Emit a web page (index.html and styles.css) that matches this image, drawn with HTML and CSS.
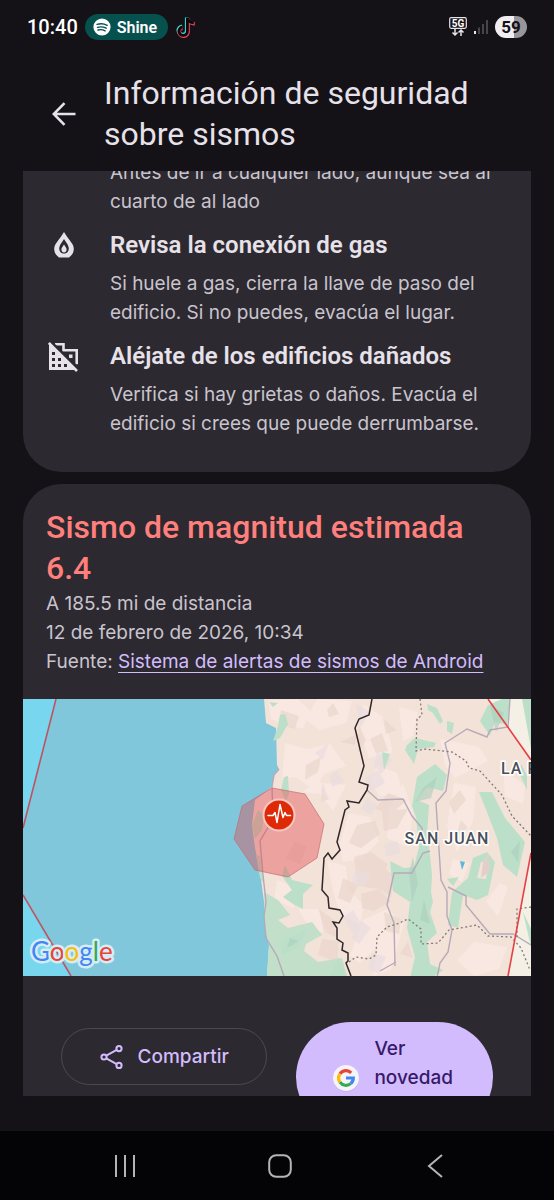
FILE: index.html
```html
<!DOCTYPE html>
<html lang="es">
<head>
  <meta charset="UTF-8" />
  <meta name="viewport" content="width=device-width, initial-scale=1.0"/>
  <title>Información de seguridad sobre sismos</title>
  <link rel="stylesheet" href="styles.css">
</head>
<body>
<div class="screen">

  <!-- Status bar -->
  <div class="status-bar">
    <span class="clock">10:40</span>
    <span class="now-playing">
      <svg width="18" height="18" viewBox="0 0 18 18">
        <circle cx="9" cy="9" r="8.6" fill="#fff"/>
        <path d="M4 6.4c3.400-1 7.200-.7 10.200.9M4.500 9.300c2.900-.8 6-.5 8.700.9M5 12c2.400-.6 4.900-.4 7.100.8" fill="none" stroke="#06504e" stroke-width="1.400" stroke-linecap="round"/>
      </svg>
      Shine
    </span>
    <svg class="tiktok" width="20" height="22" viewBox="0 0 20 22">
      <path d="M10.800 1.500v13a4.200 4.200 0 1 1-4.600-4.200" fill="none" stroke="#35d5d0" stroke-width="3.800"/>
      <path d="M12 2.500v13a4.400 4.400 0 1 1-5.400-4M12 3c1 3 3 4.600 6.800 4.800" fill="none" stroke="#e8405c" stroke-width="3.800"/>
      <path d="M11.400 1.700v13.300a4.200 4.200 0 1 1-4.800-4M11.400 2c.8 2.800 2.800 4.400 6.400 4.800" fill="none" stroke="#0a0a0c" stroke-width="2.800"/>
    </svg>
    <span class="status-icons">
      <svg width="18" height="20" viewBox="0 0 18 20">
        <rect x=".7" y=".7" width="16.600" height="10.600" rx="1.500" fill="none" stroke="#e6e4e8" stroke-width="1.200"/>
        <text x="9" y="9.500" text-anchor="middle" class="net-label">5G</text>
        <path d="M6 12v6M3.500 15.500 6 18l2.500-2.500M12 19v-6M9.500 15.500 12 13l2.500 2.500" fill="none" stroke="#e6e4e8" stroke-width="1.500"/>
      </svg>
      <svg width="14" height="16" viewBox="0 0 14 16">
        <path d="M1 12v3" stroke="#fff" stroke-width="1.800"/>
        <path d="M5 8.500V15M9 5v10M13 1v14" stroke="#5d5b61" stroke-width="1.400"/>
      </svg>
      <span class="battery">59</span>
    </span>
  </div>

  <!-- Header -->
  <header class="app-header">
    <a href="#" class="back" aria-label="Atrás">
      <svg width="24" height="24" viewBox="0 0 24 24" fill="none" stroke="#e7e1e9" stroke-width="2.600"><path d="M23.500 12H2M12.500 1.200 1.800 12l10.700 10.800"/></svg>
    </a>
    <h1>Información de seguridad sobre sismos</h1>
  </header>

  <!-- Content -->
  <main class="content">
    <section class="card tips">
      <div class="tip tip-cut">
        <p>Antes de ir a cualquier lado, aunque sea al cuarto de al lado</p>
      </div>
      <div class="tip">
        <svg width="32" height="32" viewBox="0 0 32 32">
          <path fill-rule="evenodd" fill="#e7e1e9" d="M16 3c2 3.500 4.500 6.500 8 11.500 3.400 5 1.800 10.500-3 14h-10c-4.800-3.500-6.400-9-3-14C11.500 9.500 14 6.500 16 3zm0 7c-1.500 2.500-4 5-4.700 8.500-.5 3.500 1.700 6 4.700 6s5.200-2.500 4.700-6C20 15 17.500 12.500 16 10z"/>
          <path fill="#e7e1e9" d="M16 15.500c1.400 2 2.600 3.400 2.600 5 0 1.800-1.200 3-2.600 3s-2.600-1.200-2.600-3c0-1.600 1.200-3 2.600-5z"/>
        </svg>
        <h2>Revisa la conexión de gas</h2>
        <p>Si huele a gas, cierra la llave de paso del edificio. Si no puedes, evacúa el lugar.</p>
      </div>
      <div class="tip">
        <svg width="32" height="32" viewBox="0 0 32 32">
          <path fill-rule="evenodd" fill="#e7e1e9" d="M1 4 28 30H1zM4 12v3h3v-3zm0 6v3h3v-3zm6 0v3h3v-3zm-6 6v3h3v-3zm6 0v3h3v-3zm6 0v3h3v-3z"/>
          <path fill="none" stroke="#e7e1e9" stroke-width="2.600" d="M7 4.300h8.500v6H28.700v14"/>
          <path fill="#e7e1e9" d="M21 14.500h3.500V18H21z"/>
          <path d="M3.500 2 30.500 28" stroke="#2c2930" stroke-width="1.800"/>
          <path d="M.8 3 29 31" stroke="#e7e1e9" stroke-width="2.600"/>
        </svg>
        <h2>Aléjate de los edificios dañados</h2>
        <p>Verifica si hay grietas o daños. Evacúa el edificio si crees que puede derrumbarse.</p>
      </div>
    </section>

    <section class="card quake">
      <div class="quake-info">
        <h2>Sismo de magnitud estimada 6.4</h2>
        <p>A 185.5 mi de distancia</p>
        <p>12 de febrero de 2026, 10:34</p>
        <p>Fuente: <a href="#">Sistema de alertas de sismos de Android</a></p>
      </div>

      <svg class="map" viewBox="0 0 508 277" role="img" aria-label="Mapa del sismo">
        <!-- sea and land -->
        <rect width="508" height="277" fill="#78d6ef"/>
        <path fill="#80c7dc" d="M33 0h240v277H48L0 196v-67z"/>
        <path fill="#f3e2d7" d="M241 0l2 24 10 5 1 37 2 4-5 6-2 12-17 13-3 25 3 23 5 24 4 30 1 26 4 17-2 31h264V0z"/>
        <path fill="#f4f0e5" d="M465 0h43v61zM508 154v123h-23z"/>

        <!-- relief -->
        <path fill="#f8e8e1" d="M245 2l30-2 12 12-7 18-20-5-12-5zM294 0l35 2-6 22-26 7-14-10zM262 44l22 6 23-5 16 22-22 8-10 16-19-13-13 2zM292 83l31 3-13 26-13-17-17-2zM340 5l22 14 8 35-24 5-9-26zM354 66l20 8 6 21-23 2-10-12zM326 114l21 4 9 24-18 18-18 3-4-17zM304 162l19 5 2 23 16 16-4 19-19-9-7-20zM340 221l24-11 17 14-7 27-21-2-16 15-10-7zM275 210l20 0 10 24-17-3zM431 84l22 4-3 35-16 30-10-26zM417 40l39 8 9 14-33 17-10-13zM430 160l16 4-7 19-13-8zM463 202l14-18 8 4-10 30zM451 243l33 5-8 22-25 7-17-16zM376 8l19 5-5 24-10 5zM380 84l10 29-5 35-21-9 2-29zM356 239l20 5-8 27-18 6zM254 181l15 6 2 22-20-8zM480 70l22 17-2 18-18-8z"/>
        <path fill="#e9d6cc" opacity=".7" d="M304 11l6-7 6 11-10 3zM317 43l17-8-2 11zM283 66l15-8-3 15-13 8zM299 88l7 12-8 3zM336 26l7 15-8 13zM365 94l19 7-16 14-16-5zM359 112l26-2-11 19-13 3zM334 126l18-4 5 13-19 14-12-5zM331 158l17-5 17 12-10 25-20-3zM320 179l15 7-8 18-12-5zM361 169l11 9-4 20-13-9zM338 195l18-5 12 12-17 10-12-3zM361 213l17 7-2 15-13-3zM296 210l15 11 2 17-12-5zM272 142l12 6-7 17-14-6zM299 240l17 2-2 21-19-7zM258 11l18 6-4 13-16-5zM347 40l12-6 6 18-12 2zM360 19l13 12-10 4zM437 91l6 10-12 14-5-12zM438 121l7 8-12 8zM377 255l8-13 5 17z"/>
        <path fill="#e9dde1" opacity=".7" d="M306 77l8-5 7 11-12 5zM298 94l2-12 5 19zM341 79l14-8 7 13-13 8zM344 99l11 7-8 10-9-6zM332 171l16 3-7 14-12-5zM320 218l10-7 10 17-10 6zM338 222l10 7-12 16-8-7zM354 52l15 9-11 14-7-8zM361 145l13-3 4 12-15 4zM349 254l14 4-7 17-11-5zM292 54l14-10-6 17zM333 5l13 7-8 17z"/>

        <!-- vegetation -->
        <path fill="#bcdfc9" d="M257 16l5-1 3 10-8 14-7 3 5-15zM261 78l4-1 1 18-3 7-5-11zM246 3l9 1-5 4zM229 126l6-15 6 5-2 15-7 9zM233 156l4 1 4 28-4-6z"/>
        <path fill="#c2dfca" d="M241 193l14 8 12 15-12 5 10 8 24-6 10 13-16 9-2 7 14 11 24-4 5 18h-80l2-31-4-17z"/>
        <path fill="#bcdfc9" d="M262 166l7 15 21 5-10 9v15l-10-5-10-7 9-7-10-14zM258 242l27-13-9 19-17 8zM315 258l7 19h-15z"/>
        <path fill="#bcdfc9" d="M359 53l8 2-6 16zM384 46l8-7 21 5-2 4-16 2-4 15-9-14zM404 5l10 4 6 13-3 3-7-11-5-3zM424 22l7 2-2 11-5-3zM457 22l8-16 14-6h8l-3 26-12-3-5 14zM499 0h9v50zM498 65l6 11v15l-7-15z"/>
        <path fill="#bcdfc9" d="M394 78l18-13 12 11-4 16-16-4-10 13 12 5-2 29 3 22 2 19-1 17 2 10-3 10 7 21-10 9 3 22 13 6-10 7-10 9h-15l7-29-8-29 3-26-17-11-3-30 14 7 10-1 5-20-3-30-4-11z"/>
        <path fill="#bcdfc9" fill-rule="evenodd" d="M456 93l13 0 13 26 20 24-8 35-14-12-6-27-10-26zM450 159l14-6 8 10-7 33-11 5-14-5-5 33-10-3 4-33 16-14zM458 163l-4 16 9 1 2-19zM424 180l12-2-6 9zM500 213l8 17v18z"/>
        <path fill="#aacfbc" opacity=".6" d="M392 103l8-14 14-11-6 21zM386 173l4-15 5 27-6 18zM397 221l4-20 6 24zM467 6l14 8-8 19zM488 153l9-11-2 21zM267 239l9 3-12 7z"/>
        <path fill="#e3cfca" d="M460 163l5-8 2 17-9 7z"/>
        <path fill="#5cb7d6" d="M437 162l5 1-3 8zM398 131l5 9-4-3z"/>

        <!-- roads -->
        <g fill="none" stroke="#b5aab9" stroke-width="1.400">
          <path d="M256 70l-5 6-2 12 1 32-13 22 3 34 3 27-2 14 2 22 11 18 7 20"/>
          <path d="M344 91l11 10 25-1 9 17 10 12 1 7M407 152l-7 2-11 20h-18l-7 32 7 18 1 43M373 263l-16 9"/>
          <path d="M487 0l-2 28-18 3-3 7-20-8-22 14 5 20-4 28-10 12 5 77 6 12v24l5 14-4 22-8 11-3 15"/>
          <path d="M425 188l18 9v9l24 29h23l18 11"/>
        </g>
        <g fill="none" stroke="#81797b" stroke-width="1.300" stroke-dasharray="2 2.500">
          <path d="M397 0l2 16-5 4-1 32 8-2 28 3 14 9 3 7 11 3 22 24 10 21 19 20"/>
          <path d="M326 263l7-5 13 2 7-4 1-18 10-10 10-3 11-5 13 10v15l17-1 11-13 28-5 11 11 23 1 10 11 9 22M508 208l-14 2v29"/>
        </g>
        <path fill="none" stroke="#30272b" stroke-width="1.500" d="M349 0l-3 16-10 4-4 9 9 38-5 16 9 3-1 5-8 13-12-2 2 6-4 3-8 32 3 8-8 9-4-6-4 5-2 32 6 7 1 11 11 2 3 6-4 7-6-1 4 6v11l6 4-1 7 6 3v8l-2 2 5 13"/>

        <!-- alert areas -->
        <g fill="none" stroke-width="1.600">
          <path stroke="#bd5460" d="M33 0 0 129M0 196l48 81"/>
          <path stroke="#e64045" d="M465 0l43 61M508 154l-23 123"/>
        </g>
        <path fill="#e0464a" fill-opacity=".4" stroke="#c96a70" stroke-opacity=".7" d="M249 89l33 6 19 30-7 34-29 19-33-7-21-31 8-33z"/>
        <circle cx="256" cy="116" r="16.500" fill="#f8c8c4"/>
        <circle cx="256" cy="116" r="14.500" fill="#de2a07"/>
        <path d="M245 116.500h5l2-3 2 10 3-18 3 13 2-5 1.500 3h4" fill="none" stroke="#fff" stroke-width="1.500" stroke-linejoin="round" stroke-linecap="round"/>

        <text x="424" y="145" text-anchor="middle" class="place">SAN JUAN</text>
        <text x="478" y="75" class="place">LA RIOJA</text>
        <text x="8" y="262" class="google"><tspan fill="#4285f4">G</tspan><tspan fill="#ea4335">o</tspan><tspan fill="#fbbc05">o</tspan><tspan fill="#4285f4">g</tspan><tspan fill="#34a853">l</tspan><tspan fill="#ea4335">e</tspan></text>
      </svg>

      <div class="actions">
        <button type="button" class="btn share">
          <svg width="24" height="24" viewBox="0 0 24 24" fill="none" stroke="#d3bcfd" stroke-width="2">
            <circle cx="4" cy="12" r="2.600"/><circle cx="19" cy="3.600" r="2.600"/><circle cx="19" cy="20.400" r="2.600"/>
            <path d="M6.300 10.700 16.700 4.900M6.300 13.300l10.400 5.800"/>
          </svg>
          Compartir
        </button>
        <button type="button" class="btn news">
          <svg width="28" height="28" viewBox="0 0 28 28">
            <circle cx="14" cy="14.500" r="13" fill="#b9a5df"/>
            <circle cx="14" cy="14" r="13" fill="#f5f4f8"/>
            <g fill="none" stroke-width="3.200">
              <path stroke="#ea4335" d="M8 9.800A7.300 7.300 0 0 1 19.200 8.800"/>
              <path stroke="#fbbc05" d="M8 18.200A7.300 7.300 0 0 1 8 9.800"/>
              <path stroke="#34a853" d="M18.700 19.600A7.300 7.300 0 0 1 8 18.200"/>
              <path stroke="#4285f4" d="M14 14h7.300a7.300 7.300 0 0 1-2.600 5.600"/>
            </g>
          </svg>
          <span>Ver novedad</span>
        </button>
      </div>
    </section>
  </main>

  <!-- System navigation -->
  <nav class="system-nav">
    <button type="button" aria-label="Recientes">
      <svg width="24" height="24" viewBox="0 0 24 24" stroke="#b5b5b7" stroke-width="2"><path d="M3 1v22M12 1v22M21 1v22"/></svg>
    </button>
    <button type="button" aria-label="Inicio">
      <svg width="24" height="24" viewBox="0 0 24 24" fill="none" stroke="#b5b5b7" stroke-width="2"><rect x="1.200" y="1.200" width="21.600" height="21.600" rx="7"/></svg>
    </button>
    <button type="button" aria-label="Atrás">
      <svg width="24" height="24" viewBox="0 0 24 24" fill="none" stroke="#b5b5b7" stroke-width="2"><path d="M19 1 6 12l13 11"/></svg>
    </button>
  </nav>

</div>
</body>
</html>
```

FILE: styles.css
```css
* {
  box-sizing: border-box;
}

body {
  margin: 0;
  background-color: #141117;
  color: #c9c4ce;
  font-family: Inter, Roboto, sans-serif;
  font-size: 19px;
  line-height: 29px;
}

h1, h2, p {
  margin: 0;
}

svg {
  display: block;
  flex-shrink: 0;
}

.screen {
  display: flex;
  flex-direction: column;
  height: 100vh;
}

/* status bar */
.status-bar {
  display: flex;
  align-items: center;
  height: 54px;
  padding: 0 27px;
  color: #fff;
  font-family: Roboto, sans-serif;
}

.clock {
  font-size: 20px;
  font-weight: 500;
}

.now-playing {
  display: flex;
  align-items: center;
  gap: 6px;
  height: 26px;
  margin-left: 7px;
  padding: 0 11px 0 8px;
  border-radius: 13px;
  background-color: #06504e;
  font-size: 16px;
  font-weight: 600;
}

.tiktok {
  margin-left: 8px;
}

.status-icons {
  display: flex;
  align-items: center;
  gap: 7px;
  margin-left: auto;
}

.net-label {
  font-size: 10px;
  font-weight: 700;
  fill: #fff;
}

.battery {
  width: 32px;
  border-radius: 11px;
  background: linear-gradient(to right, #f0eef2 59%, #98969b 59%);
  color: #141117;
  font-size: 17px;
  font-weight: 700;
  line-height: 22px;
  text-align: center;
}

/* header */
.app-header {
  display: flex;
  align-items: center;
  gap: 28px;
  padding: 19px 52px 16px;
}

.app-header h1 {
  color: #e7e1e9;
  font-family: Roboto, sans-serif;
  font-size: 32px;
  font-weight: 400;
  line-height: 41px;
}

/* scrolling cards */
.content {
  flex: 1;
  min-height: 0;
  overflow: hidden;
  margin: 0 23px 35px;
}

.card {
  border-radius: 38px;
  background-color: #2c2930;
  overflow: hidden;
}

.tips {
  display: flex;
  flex-direction: column;
  gap: 13px;
  margin-top: -13px;
  padding: 0 28px 34px 25px;
  border-radius: 0 0 38px 38px;
}

.tip {
  display: grid;
  grid-template-columns: 32px 1fr;
  column-gap: 30px;
  row-gap: 8px;
}

.tip h2 {
  color: #e7e1e9;
  font-family: Roboto, sans-serif;
  font-size: 24px;
  font-weight: 600;
  line-height: 32px;
}

.tip p {
  grid-column: 2;
}

.quake {
  margin-top: 12px;
}

.quake-info {
  padding: 23px;
}

.quake-info h2 {
  color: #ff7f7c;
  font-family: Roboto, sans-serif;
  font-size: 32px;
  font-weight: 500;
  line-height: 41px;
}

.quake-info a {
  color: #d3bcfd;
  text-underline-offset: 4px;
}

.map {
  width: 100%;
  height: auto;
}

.place {
  font-family: Roboto, sans-serif;
  font-size: 16px;
  font-weight: 500;
  letter-spacing: 1px;
  fill: #4b4f58;
  stroke: #fff;
  stroke-width: 3px;
  paint-order: stroke;
}

.google {
  font-family: Lato, sans-serif;
  font-size: 26px;
  font-weight: 400;
  stroke: #d5ecf5;
  stroke-width: 5px;
  stroke-linejoin: round;
  paint-order: stroke;
}

/* buttons */
.actions {
  display: grid;
  grid-template-columns: 21fr 20fr;
  align-items: start;
  gap: 29px;
  padding: 46px 38px 24px;
}

.btn {
  display: flex;
  justify-content: center;
  gap: 14px;
  font-family: inherit;
  font-size: 19px;
  font-weight: 500;
  line-height: 29px;
  cursor: pointer;
}

.share {
  align-items: center;
  margin-top: 6px;
  padding: 13px 0;
  border: 1px solid #4d4952;
  border-radius: 29px;
  background: none;
  color: #d3bcfd;
}

.news {
  align-items: flex-end;
  padding: 12px 36px 40px;
  border: 0;
  border-radius: 55px;
  background-color: #d3bcfd;
  color: #351a69;
  text-align: left;
}

/* system navigation */
.system-nav {
  display: flex;
  justify-content: space-between;
  align-items: center;
  height: 69px;
  padding: 0 101px 0 107px;
  background-color: #040406;
}

.system-nav button {
  padding: 6px;
  border: 0;
  background: none;
}
```
